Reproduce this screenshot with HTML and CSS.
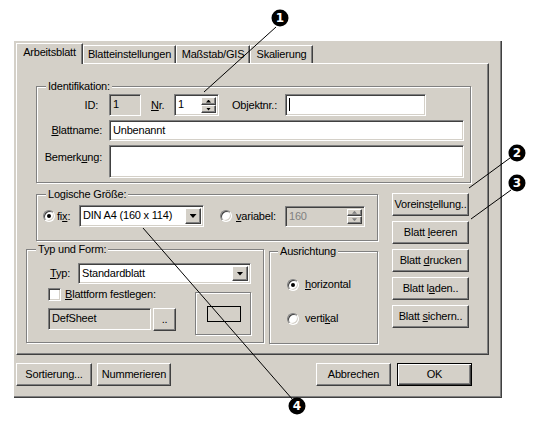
FILE: index.html
```html
<!DOCTYPE html>
<html lang="de">
<head>
    <meta charset="UTF-8">
    <title>Arbeitsblatt</title>
    <link rel="stylesheet" href="styles.css">
</head>
<body>
    <div class="dialog">
        <div class="tabs">
            <div class="tab active tab-arbeit">Arbeitsblatt</div>
            <div class="tab tab-einst">Blatteinstellungen</div>
            <div class="tab tab-gis">Maßstab/GIS</div>
            <div class="tab tab-skal">Skalierung</div>
        </div>

        <div class="panel">
            <fieldset class="group ident">
                <legend>Identifikation:</legend>
                <div class="ident-grid">
                    <span class="lbl lbl-id">ID:</span>
                    <div class="id-row">
                        <div class="field disabled id-field">1</div>
                        <span class="nr-lbl"><u>N</u>r.</span>
                        <div class="field spin nr-field">
                            <span class="spin-text">1</span>
                            <span class="spin-btns"><span class="spin-btn up"></span><span class="spin-btn down"></span></span>
                        </div>
                        <span class="obj-lbl">Objektnr.:</span>
                        <div class="field obj-field"><span class="caret"></span></div>
                    </div>

                    <span class="lbl"><u>B</u>lattname:</span>
                    <div class="field name-field">Unbenannt</div>

                    <span class="lbl lbl-top">Bemerk<u>u</u>ng:</span>
                    <div class="field note-field"></div>
                </div>
            </fieldset>

            <div class="lower">
                <div class="lower-left">
                    <fieldset class="group logic">
                        <legend>Logische Größe:</legend>
                        <div class="logic-row">
                            <span class="radio checked"></span>
                            <span class="fix-lbl">fi<u>x</u>:</span>
                            <div class="field combo din-combo">
                                <span class="combo-text">DIN A4 (160 x 114)</span>
                                <span class="drop-btn"></span>
                            </div>
                            <span class="radio var-radio"></span>
                            <span class="var-lbl"><u>v</u>ariabel:</span>
                            <div class="field spin disabled var-field">
                                <span class="spin-text grey">160</span>
                                <span class="spin-btns off"><span class="spin-btn up"></span><span class="spin-btn down"></span></span>
                            </div>
                        </div>
                    </fieldset>

                    <div class="type-row">
                        <fieldset class="group typ">
                            <legend>Typ und Form:</legend>
                            <div class="typ-body">
                                <div class="typ-line">
                                    <span class="typ-lbl"><u>T</u>yp:</span>
                                    <div class="field combo typ-combo">
                                        <span class="combo-text">Standardblatt</span>
                                        <span class="drop-btn"></span>
                                    </div>
                                </div>
                                <div class="form-block">
                                    <div class="form-left">
                                        <div class="check-line">
                                            <span class="checkbox"></span>
                                            <span><u>B</u>lattform festlegen:</span>
                                        </div>
                                        <div class="sheet-line">
                                            <div class="field disabled sheet-field">DefSheet</div>
                                            <button class="btn dots-btn">..</button>
                                        </div>
                                    </div>
                                    <div class="preview"><span class="preview-sheet"></span></div>
                                </div>
                            </div>
                        </fieldset>

                        <fieldset class="group orient">
                            <legend>Ausrichtung</legend>
                            <div class="orient-body">
                                <div class="orient-line">
                                    <span class="radio checked"></span>
                                    <span><u>h</u>orizontal</span>
                                </div>
                                <div class="orient-line">
                                    <span class="radio"></span>
                                    <span>verti<u>k</u>al</span>
                                </div>
                            </div>
                        </fieldset>
                    </div>
                </div>

                <div class="side-buttons">
                    <button class="btn">Voreins<u>t</u>ellung..</button>
                    <button class="btn">Blatt <u>l</u>eeren</button>
                    <button class="btn">Blatt <u>d</u>rucken</button>
                    <button class="btn">Blatt l<u>a</u>den..</button>
                    <button class="btn">Blatt <u>s</u>ichern..</button>
                </div>
            </div>
        </div>

        <div class="bottom-bar">
            <button class="btn sort-btn">Sortierung...</button>
            <button class="btn num-btn">Nummerieren</button>
            <button class="btn cancel-btn">Abbrechen</button>
            <button class="btn default ok-btn">OK</button>
        </div>
    </div>

    <!-- callout markers drawn over the dialog -->
    <svg class="callouts" width="536" height="421" viewBox="0 0 536 421">
        <g stroke="#000" stroke-width="1">
            <line x1="276" y1="27" x2="204" y2="92"/>
            <line x1="510" y1="158" x2="469" y2="188"/>
            <line x1="511" y1="190" x2="471" y2="219"/>
            <line x1="143" y1="228" x2="293" y2="400"/>
        </g>
        <g class="marker">
            <circle cx="280" cy="18" r="8.5"/>
            <text x="280" y="22">1</text>
            <circle cx="517" cy="153" r="8.5"/>
            <text x="517" y="157">2</text>
            <circle cx="517" cy="183" r="8.5"/>
            <text x="517" y="187">3</text>
            <circle cx="297" cy="406" r="8.5"/>
            <text x="297" y="410">4</text>
        </g>
    </svg>
</body>
</html>
```

FILE: styles.css
```css
body {
    margin: 0;
    box-sizing: border-box;
    width: 536px;
    height: 421px;
    padding: 41px 0 0 14px;
    position: relative;
    overflow: hidden;
    background-color: #fff;
    font-family: "Liberation Sans", Arial, sans-serif;
    font-size: 11px;
    line-height: 13px;
    letter-spacing: -0.2px;
    color: #000;
}

u {
    text-decoration: underline;
    text-underline-offset: 1px;
}

.dialog {
    box-sizing: border-box;
    width: 488px;
    height: 357px;
    padding: 2px 0 0 2px;
    background-color: #d4d0c8;
    border-right: 1px solid #404040;
    border-bottom: 1px solid #404040;
    box-shadow: inset -1px -1px #808080;
}

/* tabs */

.tabs {
    display: flex;
    height: 20px;
}

.tab {
    box-sizing: border-box;
    height: 18px;
    margin-top: 2px;
    padding-top: 2px;
    text-align: center;
    white-space: nowrap;
    background-color: #d4d0c8;
    border-top: 1px solid #fff;
    border-left: 1px solid #fff;
    border-right: 1px solid #404040;
    box-shadow: inset -1px 0 #808080;
}

.tab.active {
    height: 21px;
    margin-top: 0;
    position: relative;
    z-index: 1;
}

.tab-arbeit { width: 67px; }
.tab-einst { width: 93px; }
.tab-gis { width: 74px; }
.tab-skal { width: 63px; }

.panel {
    box-sizing: border-box;
    width: 473px;
    height: 292px;
    padding: 16px 0 0 9px;
    border: 1px solid;
    border-color: #fff #404040 #404040 #fff;
    box-shadow: inset -1px -1px #808080;
}

/* group boxes */

.group {
    box-sizing: border-box;
    margin: 0;
    padding: 0;
    min-width: 0;
    border: 1px solid #808080;
    box-shadow: inset 1px 1px #fff, 1px 1px #fff;
}

.group legend {
    margin-left: 9px;
    padding: 0 2px;
    height: 13px;
    line-height: 13px;
    background-color: #d4d0c8;
}

/* basic controls */

.field {
    box-sizing: border-box;
    height: 21px;
    padding: 3px 3px 0;
    background-color: #fff;
    border: 1px solid;
    border-color: #808080 #fff #fff #808080;
    box-shadow: inset 1px 1px #404040, inset -1px -1px #d4d0c8;
    white-space: nowrap;
    overflow: hidden;
}

.field.disabled {
    background-color: #d4d0c8;
}

.btn {
    box-sizing: border-box;
    height: 23px;
    margin: 0;
    padding: 0;
    font: inherit;
    letter-spacing: inherit;
    color: #000;
    text-align: center;
    background-color: #d4d0c8;
    border: 1px solid;
    border-color: #fff #404040 #404040 #fff;
    box-shadow: inset -1px -1px #808080;
    white-space: nowrap;
}

.btn.default {
    border: 1px solid #000;
    box-shadow: inset 1px 1px #fff, inset -1px -1px #404040, inset -2px -2px #808080;
}

.spin,
.combo {
    display: flex;
    padding: 2px;
}

.spin-text,
.combo-text {
    flex: 1;
    padding: 1px 0 0 1px;
}

.grey {
    color: #808080;
}

.spin-btns {
    display: flex;
    flex-direction: column;
    width: 15px;
}

.spin-btn {
    box-sizing: border-box;
    flex: 1;
    display: flex;
    align-items: center;
    justify-content: center;
    background-color: #d4d0c8;
    border: 1px solid;
    border-color: #fff #404040 #404040 #fff;
    box-shadow: inset -1px -1px #808080;
}

.spin-btn::after {
    content: "";
    width: 5px;
    height: 3px;
    background-color: #000;
}

.spin-btn.up::after {
    clip-path: polygon(50% 0, 100% 100%, 0 100%);
}

.spin-btn.down::after {
    clip-path: polygon(0 0, 100% 0, 50% 100%);
}

.spin-btns.off .spin-btn::after {
    background-color: #808080;
}

.drop-btn {
    box-sizing: border-box;
    width: 16px;
    display: flex;
    align-items: center;
    justify-content: center;
    background-color: #d4d0c8;
    border: 1px solid;
    border-color: #fff #404040 #404040 #fff;
    box-shadow: inset -1px -1px #808080;
}

.drop-btn::after {
    content: "";
    width: 7px;
    height: 4px;
    background-color: #000;
    clip-path: polygon(0 0, 100% 0, 50% 100%);
}

.radio {
    box-sizing: border-box;
    width: 12px;
    height: 12px;
    flex: none;
    display: flex;
    align-items: center;
    justify-content: center;
    border-radius: 50%;
    background-color: #fff;
    border: 1px solid;
    border-color: #808080 #fff #fff #808080;
    box-shadow: inset 1px 1px #404040, inset -1px -1px #d4d0c8;
}

.radio.checked::after {
    content: "";
    width: 4px;
    height: 4px;
    border-radius: 50%;
    background-color: #000;
}

.checkbox {
    box-sizing: border-box;
    width: 13px;
    height: 13px;
    flex: none;
    background-color: #fff;
    border: 1px solid;
    border-color: #808080 #fff #fff #808080;
    box-shadow: inset 1px 1px #404040, inset -1px -1px #d4d0c8;
}

/* Identifikation */

.ident {
    width: 435px;
    height: 103px;
    margin-left: 10px;
    padding-top: 1px;
}

.ident-grid {
    display: grid;
    grid-template-columns: 65px 355px;
    grid-template-rows: 22px 21px 33px;
    column-gap: 7px;
    row-gap: 4px;
}

.lbl {
    align-self: center;
    text-align: right;
    white-space: nowrap;
}

.lbl-id {
    padding-right: 4px;
}

.lbl-top {
    align-self: start;
    padding-top: 6px;
}

.id-row {
    display: flex;
    align-items: center;
}

.id-row .field {
    height: 22px;
}

.id-field { width: 32px; }

.nr-lbl {
    width: 23px;
    margin-left: 10px;
}

.nr-field { width: 45px; }

.obj-lbl {
    width: 53px;
    margin-left: 13px;
    white-space: nowrap;
}

.obj-field {
    width: 141px;
}

.caret {
    display: block;
    width: 1px;
    height: 13px;
    background-color: #000;
}

.note-field {
    height: 33px;
}

/* lower part */

.lower {
    display: flex;
    align-items: flex-start;
    margin-top: 5px;
}

.lower-left {
    width: 352px;
}

.logic {
    width: 342px;
    height: 53px;
    margin-left: 10px;
    padding-top: 4px;
}

.logic-row {
    display: flex;
    align-items: center;
    height: 22px;
    margin-left: 6px;
}

.fix-lbl {
    width: 22px;
    margin-left: 2px;
}

.din-combo {
    width: 125px;
    height: 22px;
}

.var-radio {
    margin-left: 16px;
}

.var-lbl {
    width: 49px;
    margin-left: 4px;
}

.var-field {
    width: 80px;
}

.type-row {
    display: flex;
    align-items: flex-start;
    gap: 5px;
    margin-top: 2px;
}

.typ {
    width: 238px;
    height: 100px;
    padding-top: 7px;
}

.typ-body {
    padding-left: 21px;
}

.typ-line {
    display: flex;
    align-items: center;
}

.typ-lbl {
    width: 28px;
    padding-left: 2px;
}

.typ-combo {
    width: 173px;
}

.form-block {
    display: flex;
    align-items: flex-start;
}

.form-left {
    width: 128px;
    padding-top: 4px;
}

.check-line {
    display: flex;
    align-items: center;
    gap: 4px;
    height: 13px;
    white-space: nowrap;
}

.sheet-line {
    display: flex;
    gap: 2px;
    margin-top: 7px;
}

.sheet-field {
    width: 103px;
    height: 22px;
}

.dots-btn {
    width: 23px;
}

.preview {
    box-sizing: border-box;
    width: 56px;
    height: 43px;
    margin: 8px 0 0 19px;
    display: flex;
    align-items: center;
    justify-content: center;
    padding-left: 1px;
    border: 1px solid #808080;
    box-shadow: inset 1px 1px #fff, 1px 1px #fff;
}

.preview-sheet {
    box-sizing: border-box;
    width: 34px;
    height: 16px;
    border: 1px solid #000;
}

.orient {
    width: 109px;
    height: 99px;
    margin-top: 2px;
}

.orient legend {
    margin-left: 8px;
}

.orient-body {
    padding: 20px 0 0 17px;
}

.orient-line {
    display: flex;
    align-items: center;
    gap: 6px;
    height: 13px;
    white-space: nowrap;
}

.orient-line + .orient-line {
    margin-top: 21px;
}

.side-buttons {
    display: flex;
    flex-direction: column;
    gap: 5px;
    width: 77px;
    margin: 5px 0 0 14px;
}

/* bottom buttons */

.bottom-bar {
    display: flex;
    margin-top: 8px;
    padding-right: 29px;
}

.sort-btn { width: 76px; }

.num-btn {
    width: 74px;
    margin-left: 5px;
}

.cancel-btn {
    width: 75px;
    margin-left: auto;
}

.ok-btn {
    width: 75px;
    margin-left: 6px;
}

/* callouts */

.callouts {
    position: absolute;
    left: 0;
    top: 0;
    pointer-events: none;
}

.marker circle {
    fill: #000;
}

.marker text {
    fill: #fff;
    font-family: "DejaVu Sans", sans-serif;
    font-weight: bold;
    font-size: 12px;
    letter-spacing: 0;
    text-anchor: middle;
}
```
